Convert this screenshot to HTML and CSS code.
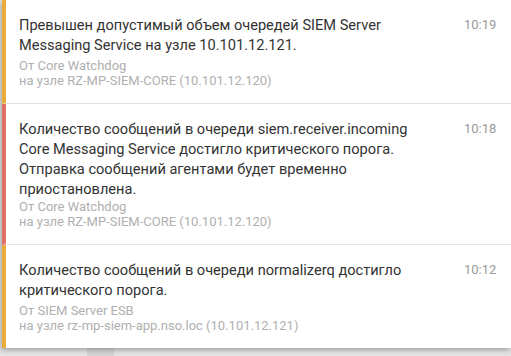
FILE: index.html
```html
<!DOCTYPE html>
<html lang="ru">
<head>
<meta charset="utf-8">
<link rel="stylesheet" href="styles.css">
</head>
<body>
<div class="page">
  <div class="list">
    <div class="item warn">
      <div class="body">
        <div class="msg">Превышен допустимый объем очередей SIEM Server Messaging Service на узле 10.101.12.121.</div>
        <div class="source">
          <div class="meta">От Core Watchdog</div>
          <div class="meta">на узле RZ-MP-SIEM-CORE (10.101.12.120)</div>
        </div>
      </div>
      <div class="time">10:19</div>
    </div>
    <div class="item crit">
      <div class="body">
        <div class="msg">Количество сообщений в очереди siem.receiver.incoming Core Messaging Service достигло критического порога. Отправка сообщений агентами будет временно приостановлена.</div>
        <div class="source">
          <div class="meta">От Core Watchdog</div>
          <div class="meta">на узле RZ-MP-SIEM-CORE (10.101.12.120)</div>
        </div>
      </div>
      <div class="time">10:18</div>
    </div>
    <div class="item warn">
      <div class="body">
        <div class="msg">Количество сообщений в очереди normalizerq достигло критического порога.</div>
        <div class="source">
          <div class="meta">От SIEM Server ESB</div>
          <div class="meta">на узле rz-mp-siem-app.nso.loc (10.101.12.121)</div>
        </div>
      </div>
      <div class="time">10:12</div>
    </div>
  </div>
  <div class="under"><div class="thumb"></div></div>
</div>
</body>
</html>
```

FILE: styles.css
```css
html, body {
  margin: 0;
  padding: 0;
  background: #e4e4e4;
}
body {
  font-family: Roboto, "Noto Sans", sans-serif;
  width: 511px;
  height: 356px;
  overflow: hidden;
}
.page {
  position: relative;
  height: 356px;
}
.list {
  position: relative;
  z-index: 1;
  margin-left: 2px;
  background: #fff;
  box-shadow: -1px 2px 5px rgba(0, 0, 0, 0.3);
}
.item {
  display: flex;
  min-height: 73px;
  border-left: 4px solid #e8ad3a;
  border-bottom: 1px solid #e3e3e3;
  padding: 15px 15px 15px 13px;
}
.item:last-child {
  border-bottom: none;
}
.item.crit {
  border-left-color: #e2706a;
}
.body {
  flex: 1;
  display: flex;
  flex-direction: column;
}
.msg {
  font-size: 14.6px;
  line-height: 20px;
  color: #333;
  padding-right: 24px;
}
.source {
  margin-top: auto;
}
.meta {
  font-size: 13px;
  line-height: 15px;
  color: #b0b0b0;
}
.time {
  font-size: 13px;
  line-height: 20px;
  color: #9a9a9a;
  width: 32px;
  text-align: right;
}
.under {
  height: 10px;
  padding-left: 87px;
}
.thumb {
  width: 27px;
  height: 10px;
  background: #d4d4d4;
}
```
